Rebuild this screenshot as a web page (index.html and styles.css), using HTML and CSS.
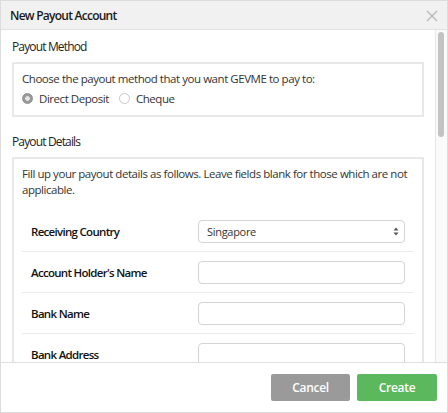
FILE: index.html
```html
<!DOCTYPE html>
<html>
<head>
<meta charset="utf-8">
<link rel="stylesheet" href="styles.css">
</head>
<body>
<div class="modal">
  <div class="modal-header">
    <div class="modal-title">New Payout Account</div>
    <svg class="close" width="12" height="12" viewBox="0 0 12 12"><path d="M1 1L11 11M11 1L1 11" stroke="#b8b8b8" stroke-width="1.2" fill="none"/></svg>
  </div>
  <div class="modal-body">
    <div class="content">
      <div class="section-title">Payout Method</div>
      <div class="box box-method">
        <div class="text">Choose the payout method that you want GEVME to pay to:</div>
        <div class="radios">
          <label class="radio"><span class="dot checked"></span>Direct Deposit</label>
          <label class="radio"><span class="dot"></span>Cheque</label>
        </div>
      </div>
      <div class="section-title second">Payout Details</div>
      <div class="box box-details">
        <div class="text">Fill up your payout details as follows. Leave fields blank for those which are not applicable.</div>
        <div class="rows">
          <div class="row">
            <div class="label">Receiving Country</div>
            <div class="field select"><span>Singapore</span>
              <svg width="6" height="9" viewBox="0 0 6 9"><path d="M3 0.5L5.5 3.5H0.5Z M3 8.5L5.5 5.5H0.5Z" fill="#555"/></svg>
            </div>
          </div>
          <div class="row">
            <div class="label">Account Holder's Name</div>
            <div class="field"></div>
          </div>
          <div class="row">
            <div class="label">Bank Name</div>
            <div class="field"></div>
          </div>
          <div class="row">
            <div class="label">Bank Address</div>
            <div class="field"></div>
          </div>
        </div>
      </div>
    </div>
    <div class="scrollbar"><div class="thumb"></div></div>
  </div>
  <div class="modal-footer">
    <button class="btn btn-cancel">Cancel</button>
    <button class="btn btn-create">Create</button>
  </div>
</div>
</body>
</html>
```
FILE: styles.css
```css
* { box-sizing: border-box; }
html, body { margin: 0; padding: 0; background: #fff; }
body {
  font-family: "Open Sans", "Noto Sans", sans-serif;
  color: #333;
  width: 448px;
  height: 413px;
  overflow: hidden;
}
.modal {
  width: 448px;
  height: 413px;
  border: 1px solid #dcdcdc;
  display: flex;
  flex-direction: column;
  background: #fff;
}
.modal-header {
  height: 29px;
  flex: none;
  background: #f1f1f1;
  border-bottom: 1px solid #e2e2e2;
  display: flex;
  align-items: center;
  justify-content: space-between;
  padding: 0 9px 0 9px;
}
.modal-title {
  font-size: 12px;
  font-weight: 600;
  color: #1a1a1a;
  letter-spacing: -0.75px;
}
.close { margin-top: 2px; }
.modal-body {
  flex: 1;
  display: flex;
  overflow: hidden;
}
.content {
  flex: 1;
  padding: 8px 11px 0 11px;
  overflow: hidden;
}
.section-title {
  font-size: 12px;
  line-height: 18px;
  color: #222;
  letter-spacing: -0.85px;
  margin-bottom: 6px;
}
.section-title.second { margin-top: 16px; }
.box {
  border: 2px solid #e8e8e8;
  padding: 7px 8px 8px 8px;
}
.text {
  font-size: 11.5px;
  line-height: 16px;
  color: #333;
  letter-spacing: -0.45px;
}
.radios {
  display: flex;
  align-items: center;
  height: 18px;
  margin-top: 2px;
  font-size: 11.5px;
  letter-spacing: -0.45px;
}
.radio {
  display: flex;
  align-items: center;
  margin-right: 10px;
}
.dot {
  width: 11px;
  height: 11px;
  border-radius: 50%;
  border: 1px solid #c8c8c8;
  background: #fff;
  margin-right: 6px;
  display: inline-block;
}
.dot.checked {
  border-color: #8f8f8f;
  background: radial-gradient(circle, #e6e6e6 0 2px, #9a9a9a 2.6px);
}
.box-details { padding-bottom: 0; }
.rows { margin-top: 13px; }
.row {
  display: flex;
  align-items: center;
  justify-content: space-between;
  height: 41px;
  padding: 0 9px;
  border-bottom: 1px solid #ececec;
}
.label {
  font-size: 11.5px;
  font-weight: 600;
  color: #111;
  letter-spacing: -0.7px;
}
.field {
  width: 207px;
  height: 23px;
  border: 1px solid #d4d4d4;
  border-radius: 4px;
  background: #fff;
}
.select {
  display: flex;
  align-items: center;
  justify-content: space-between;
  padding: 0 5px 0 8px;
  font-size: 11px;
  color: #333;
  letter-spacing: -0.3px;
}
.scrollbar {
  width: 12px;
  flex: none;
  border-left: 1px solid #e6e6e6;
  background: #fafafa;
  padding: 2px 0 0 2px;
}
.thumb {
  width: 6px;
  height: 105px;
  background: #c3c3c3;
  border-radius: 3px;
}
.modal-footer {
  height: 50px;
  flex: none;
  border-top: 1px solid #dedede;
  display: flex;
  justify-content: flex-end;
  align-items: flex-start;
  padding: 11px 10px 0 0;
  gap: 7px;
}
.btn {
  width: 80px;
  height: 27px;
  border: none;
  border-radius: 2px;
  color: #fff;
  font-family: "Open Sans", sans-serif;
  font-size: 12px;
  font-weight: 600;
  letter-spacing: -0.3px;
}
.btn-cancel { background: #9a9a9a; width: 79px; }
.btn-create { background: #5cb85c; }
```
